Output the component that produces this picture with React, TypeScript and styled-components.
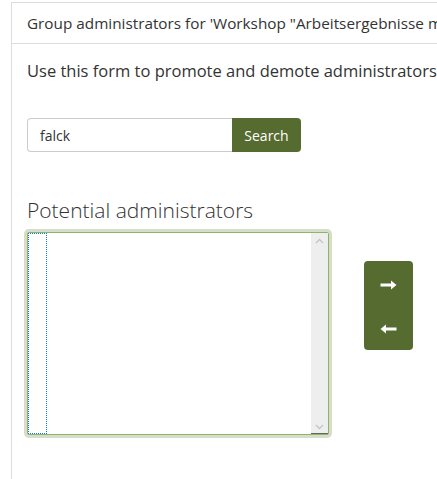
import React from "react";
import styled, { createGlobalStyle } from "styled-components";

const Global = createGlobalStyle`
  html, body { margin: 0; padding: 0; background: #fff; }
  body { font-family: "Open Sans", "Liberation Sans", sans-serif; color: #333; overflow: hidden; }
  * { box-sizing: border-box; }
`;

const Page = styled.div`
  width: 437px;
  height: 479px;
  overflow: hidden;
  padding: 2px 0 0 11px;
`;

const Panel = styled.section`
  width: 640px;
  min-height: 477px;
  border-top: 1px solid #ddd;
  border-left: 1px solid #ddd;
`;

const PanelHeading = styled.div`
  padding: 10px 15px;
  border-bottom: 1px solid #ddd;
  font-size: 15.3px;
  line-height: 20px;
  white-space: nowrap;
  color: #333;
`;

const PanelBody = styled.div`
  padding: 15px 15px 15px;
`;

const Intro = styled.p`
  margin: 0 0 35px;
  font-size: 16.5px;
  line-height: 24px;
  white-space: nowrap;
`;

const SearchRow = styled.div`
  display: flex;
  width: 274px;
  height: 34px;
`;

const SearchInput = styled.input`
  flex: 0 0 205px;
  height: 34px;
  border: 1px solid #ccc;
  border-right: none;
  border-radius: 4px 0 0 4px;
  padding: 6px 12px;
  font-family: inherit;
  font-size: 14px;
  color: #333;
  outline: none;
`;

const SearchButton = styled.button`
  flex: 1;
  height: 34px;
  border: none;
  border-radius: 0 4px 4px 0;
  background: #566b30;
  color: #fff;
  font-family: inherit;
  font-size: 14px;
  padding: 0 12px;
`;

const SectionTitle = styled.h3`
  margin: 46px 0 7px;
  font-size: 21px;
  font-weight: 300;
  line-height: 24px;
  color: #333;
`;

const Row = styled.div`
  display: flex;
  align-items: flex-start;
`;

const ListBox = styled.div`
  width: 302px;
  height: 203px;
  margin-top: 3px;
  border: 1px solid #8db563;
  border-radius: 2px;
  box-shadow: 0 0 0 3px #d8dccb;
  background: #fff;
  display: flex;
`;

const FocusOption = styled.div`
  width: 19px;
  border: 1px dotted #0a7fe0;
`;

const Spacer = styled.div`
  flex: 1;
`;

const Scrollbar = styled.div`
  width: 17px;
  background: #eeeeee;
  display: flex;
  flex-direction: column;
  justify-content: space-between;
  align-items: center;
  padding: 5px 0 3px;
  border-bottom: 1px solid #666;
`;

const Chevron = ({ up }: { up?: boolean }) => (
  <svg width="9" height="6" viewBox="0 0 9 6">
    <path
      d={up ? "M1 5 L4.5 1.5 L8 5" : "M1 1 L4.5 4.5 L8 1"}
      fill="none"
      stroke="#c4c4c4"
      strokeWidth="1.3"
    />
  </svg>
);

const MoveGroup = styled.div`
  margin: 32px 0 0 35px;
  width: 49px;
  height: 89px;
  background: #566b30;
  border-radius: 4px;
  display: flex;
  flex-direction: column;
  align-items: center;
  justify-content: space-between;
  padding: 18px 0 16px;
`;

const MoveButton = styled.button`
  border: none;
  background: transparent;
  padding: 0;
  width: 17px;
  height: 11px;
  display: flex;
  align-items: center;
  justify-content: center;
`;

const Arrow = ({ left }: { left?: boolean }) => (
  <svg width="17" height="10" viewBox="0 0 17 10" style={left ? { transform: "scaleX(-1)" } : undefined}>
    <rect x="0.5" y="3.5" width="12" height="3" fill="#fff" />
    <path d="M11 0.5 L16.5 5 L11 9.5 Z" fill="#fff" />
  </svg>
);

export default function App() {
  return (
    <>
      <Global />
      <Page>
        <Panel>
          <PanelHeading>
            Group administrators for 'Workshop "Arbeitsergebnisse mit Moodle präsentieren"'
          </PanelHeading>
          <PanelBody>
            <Intro>Use this form to promote and demote administrators for this group.</Intro>
            <SearchRow>
              <SearchInput defaultValue="falck" />
              <SearchButton>Search</SearchButton>
            </SearchRow>
            <SectionTitle>Potential administrators</SectionTitle>
            <Row>
              <ListBox>
                <FocusOption />
                <Spacer />
                <Scrollbar>
                  <Chevron up />
                  <Chevron />
                </Scrollbar>
              </ListBox>
              <MoveGroup>
                <MoveButton aria-label="Add">
                  <Arrow />
                </MoveButton>
                <MoveButton aria-label="Remove">
                  <Arrow left />
                </MoveButton>
              </MoveGroup>
            </Row>
          </PanelBody>
        </Panel>
      </Page>
    </>
  );
}
